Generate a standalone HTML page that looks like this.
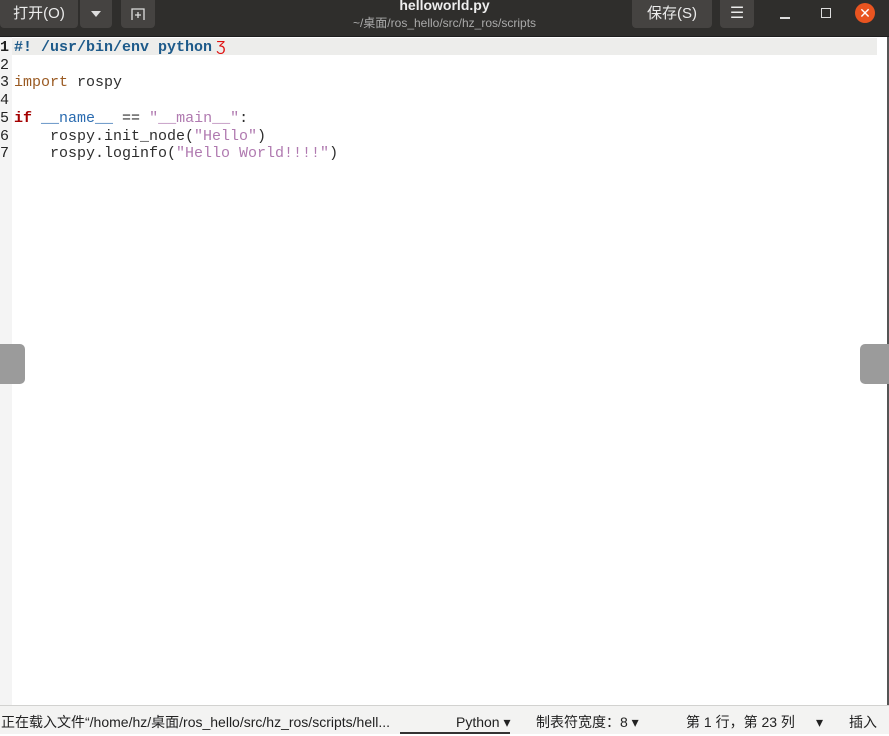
<!DOCTYPE html><html><head><meta charset="utf-8"><style>
body{margin:0;width:889px;height:733px;overflow:hidden;background:#fff;font-family:"Liberation Sans","Noto Sans CJK SC",sans-serif;position:relative}
.tb{position:absolute;left:0;top:0;width:889px;height:36px;background:#2f2e2c;border-bottom:1px solid #1e1e1e}
.btn{position:absolute;top:0;height:28px;background:#454341;border-radius:0 0 4px 4px;color:#ececec;font-size:15px;line-height:28px;text-align:center}
.t1{position:absolute;left:0;width:889px;text-align:center;color:#eee;font-weight:bold;font-size:14px;top:-3px}
.t2{position:absolute;left:0;width:889px;text-align:center;color:#aaa;font-size:12px;top:14px}
.gut{position:absolute;left:0;top:37px;width:12px;height:668px;background:#f4f4f4}
.hl{position:absolute;left:12px;top:38px;width:865px;height:17px;background:#ededeb}
.code{position:absolute;left:0;top:38px;font-family:"Liberation Mono",monospace;font-size:15px;line-height:17.7px;white-space:pre;color:#2e2e2e}
.n{color:#222;display:inline-block;width:14px}
.sb{position:absolute;left:0;top:705px;width:889px;height:28px;background:#f3f3f2;border-top:1px solid #d2d2d0;font-size:14px;line-height:28px;color:#222;white-space:nowrap}
.sb span{position:absolute;top:2px}
</style></head><body>
<div class="tb">
<div class="btn" style="left:0;width:78px">打开(O)</div>
<div class="btn" style="left:80px;width:32px"><svg width="12" height="8" style="margin-top:10px"><path d="M1 1h10L6 7z" fill="#ddd"/></svg></div>
<div class="btn" style="left:121px;width:34px"><svg width="16" height="14" style="margin-top:7px"><path d="M2 13V2h12v11" stroke="#ddd" fill="none" stroke-width="1.3"/><path d="M8 5v6M5 8h6" stroke="#ddd" stroke-width="1.3"/></svg></div>
<div class="t1">helloworld.py</div>
<div class="t2">~/桌面/ros_hello/src/hz_ros/scripts</div>
<div class="btn" style="left:632px;width:80px">保存(S)</div>
<div class="btn" style="left:720px;width:34px;font-size:16px">☰</div>
<div style="position:absolute;left:780px;top:17px;width:10px;height:1.5px;background:#ddd"></div>
<div style="position:absolute;left:821px;top:8px;width:8px;height:8px;border:1.5px solid #ddd"></div>
<div style="position:absolute;left:855px;top:3px;width:20px;height:20px;border-radius:50%;background:#e95420;color:#fff;text-align:center;line-height:20px;font-size:14px">✕</div>
</div>
<div class="gut"></div>
<div class="hl"></div>
<div style="position:absolute;left:887px;top:37px;width:2px;height:668px;background:#555"></div>
<div class="code"><b class="n">1</b><b style="color:#1d5a8a">#! /usr/bin/env python</b><span style="color:#e01010;font-family:'Liberation Sans';"> Ʒ</span>
<span class="n">2</span>
<span class="n">3</span><span style="color:#9a5a22">import</span> rospy
<span class="n">4</span>
<span class="n">5</span><b style="color:#a40000">if</b> <span style="color:#2a6bb0">__name__</span> == <span style="color:#b07ab0">"__main__"</span>:
<span class="n">6</span>    rospy.init_node(<span style="color:#b07ab0">"Hello"</span>)
<span class="n">7</span>    rospy.loginfo(<span style="color:#b07ab0">"Hello World!!!!"</span>)</div>
<div style="position:absolute;left:0;top:344px;width:25px;height:40px;background:#9b9b9b;border-radius:0 5px 5px 0"></div>
<div style="position:absolute;left:860px;top:344px;width:29px;height:40px;background:#9b9b9b;border-radius:5px 0 0 5px"></div>
<div class="sb">
<span style="left:1px">正在载入文件“/home/hz/桌面/ros_hello/src/hz_ros/scripts/hell...</span>
<span style="left:456px">Python ▾</span>
<span style="left:536px">制表符宽度：8 ▾</span>
<span style="left:686px">第 1 行，第 23 列</span>
<span style="left:816px">▾</span>
<span style="left:849px">插入</span>
<div style="position:absolute;left:400px;top:26px;width:110px;height:2px;background:#333"></div>
</div>
</body></html>
